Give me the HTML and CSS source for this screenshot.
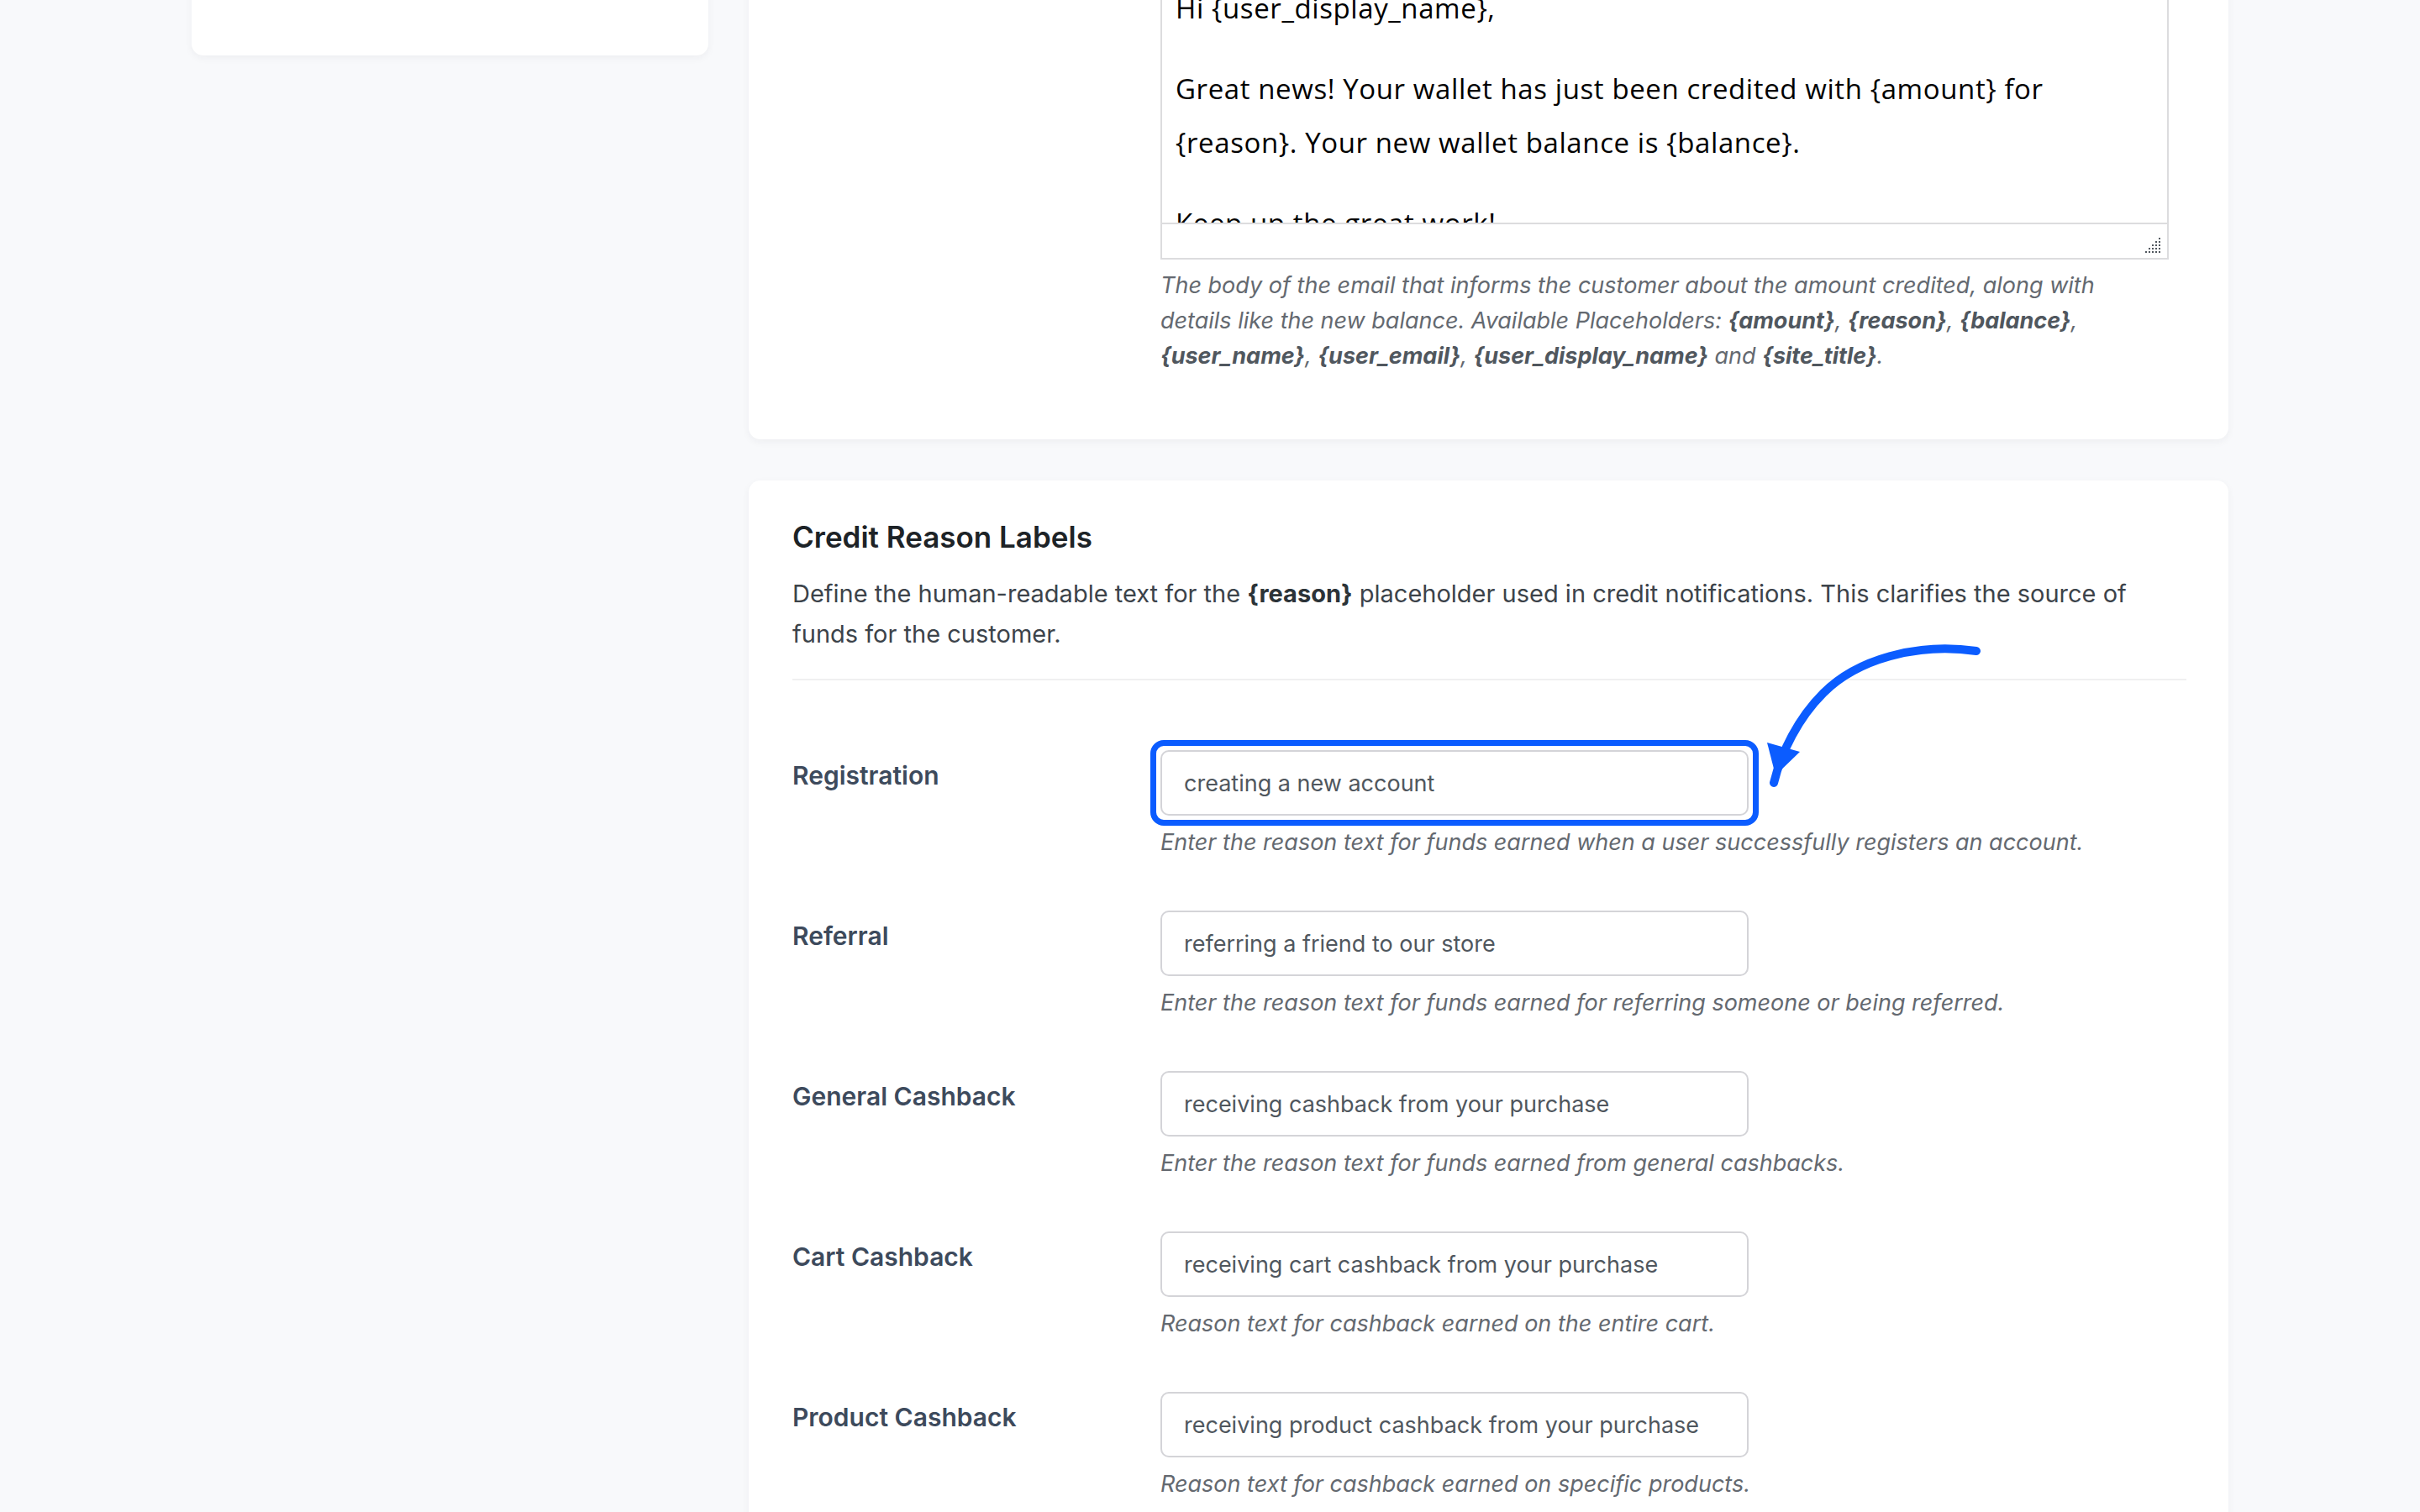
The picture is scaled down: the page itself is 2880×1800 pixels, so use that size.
FILE: index.html
```html
<!DOCTYPE html>
<html lang="en">
<head>
<meta charset="utf-8">
<title>Wallet Notification Settings</title>
<link rel="stylesheet" href="styles.css">
</head>
<body>
<div class="layout">
  <aside class="sidebar">
    <div class="side-card"></div>
  </aside>
  <main class="main">
    <section class="card card-email">
      <div class="form-row">
        <div class="form-label"></div>
        <div class="form-field">
          <div class="editor">
            <div class="editor-body">
              <p>Hi {user_display_name},</p>
              <p>Great news! Your wallet has just been credited with {amount} for<br>{reason}. Your new wallet balance is {balance}.</p>
              <p>Keep up the great work!</p>
            </div>
            <div class="editor-status">
              <svg class="grip" width="20" height="18" viewBox="0 0 20 18">
                <g fill="#50575e">
                  <rect x="16" y="0" width="2" height="2"/>
                  <rect x="12" y="4" width="2" height="2"/><rect x="16" y="4" width="2" height="2"/>
                  <rect x="8" y="8" width="2" height="2"/><rect x="12" y="8" width="2" height="2"/><rect x="16" y="8" width="2" height="2"/>
                  <rect x="4" y="12" width="2" height="2"/><rect x="8" y="12" width="2" height="2"/><rect x="12" y="12" width="2" height="2"/><rect x="16" y="12" width="2" height="2"/>
                  <rect x="0" y="16" width="2" height="2"/><rect x="4" y="16" width="2" height="2"/><rect x="8" y="16" width="2" height="2"/><rect x="12" y="16" width="2" height="2"/><rect x="16" y="16" width="2" height="2"/>
                </g>
              </svg>
            </div>
          </div>
          <p class="help">The body of the email that informs the customer about the amount credited, along with<br>details like the new balance. Available Placeholders: <b>{amount}</b>, <b>{reason}</b>, <b>{balance}</b>,<br><b>{user_name}</b>, <b>{user_email}</b>, <b>{user_display_name}</b> and <b>{site_title}</b>.</p>
        </div>
      </div>
    </section>

    <section class="card card-reasons">
      <h2 class="card-title">Credit Reason Labels</h2>
      <p class="intro">Define the human-readable text for the <strong>{reason}</strong> placeholder used in credit notifications. This clarifies the source of<br>funds for the customer.</p>
      <div class="rows">
        <div class="row">
          <label class="row-label" for="r1">Registration</label>
          <div class="row-field">
            <div class="input-wrap highlighted"><input id="r1" class="text-input" type="text" value="creating a new account"></div>
            <p class="help">Enter the reason text for funds earned when a user successfully registers an account.</p>
          </div>
        </div>
        <div class="row">
          <label class="row-label" for="r2">Referral</label>
          <div class="row-field">
            <div class="input-wrap"><input id="r2" class="text-input" type="text" value="referring a friend to our store"></div>
            <p class="help">Enter the reason text for funds earned for referring someone or being referred.</p>
          </div>
        </div>
        <div class="row">
          <label class="row-label" for="r3">General Cashback</label>
          <div class="row-field">
            <div class="input-wrap"><input id="r3" class="text-input" type="text" value="receiving cashback from your purchase"></div>
            <p class="help">Enter the reason text for funds earned from general cashbacks.</p>
          </div>
        </div>
        <div class="row">
          <label class="row-label" for="r4">Cart Cashback</label>
          <div class="row-field">
            <div class="input-wrap"><input id="r4" class="text-input" type="text" value="receiving cart cashback from your purchase"></div>
            <p class="help">Reason text for cashback earned on the entire cart.</p>
          </div>
        </div>
        <div class="row">
          <label class="row-label" for="r5">Product Cashback</label>
          <div class="row-field">
            <div class="input-wrap"><input id="r5" class="text-input" type="text" value="receiving product cashback from your purchase"></div>
            <p class="help">Reason text for cashback earned on specific products.</p>
          </div>
        </div>
      </div>
      <svg class="arrow" width="280" height="200" viewBox="0 0 280 200">
        <path d="M262 25 C 190 15 120 35 80 75 C 50 105 30 145 21 182" fill="none" stroke="#0b5cff" stroke-width="10" stroke-linecap="round"/>
        <polygon points="13,134 52,145 23,173" fill="#0b5cff"/>
      </svg>
    </section>
  </main>
</div>
</body>
</html>
```
FILE: styles.css
```css
* { box-sizing: border-box; }
html, body { margin: 0; padding: 0; }
body {
  background: #f8f9fb;
  font-family: Inter, "Liberation Sans", sans-serif;
  color: #3c434a;
  overflow: hidden;
}
.layout {
  display: flex;
  align-items: flex-start;
  gap: 48px;
  padding-left: 228px;
  margin-top: -200px;
}
.sidebar { width: 615px; flex: none; }
.side-card {
  height: 266px;
  background: #fff;
  border-radius: 14px;
  box-shadow: 0 3px 10px rgba(30, 40, 60, 0.05);
}
.main { width: 1761px; flex: none; display: flex; flex-direction: column; gap: 49px; }
.card {
  background: #fff;
  border-radius: 14px;
  box-shadow: 0 3px 10px rgba(30, 40, 60, 0.05);
}
.card-email { padding: 166px 50px 78px 52px; }
.form-row { display: grid; grid-template-columns: 438px 1fr; }
.editor {
  width: 1200px;
  border: 2px solid #dcdcde;
  background: #fff;
}
.editor-body {
  height: 299px;
  overflow: hidden;
  padding: 10px 16px;
  font-family: "Open Sans", sans-serif;
  font-size: 33px;
  letter-spacing: 0.6px;
  line-height: 64px;
  color: #000;
  border-bottom: 2px solid #dcdcde;
}
.editor-body p { margin: 0 0 32px; }
.editor-status {
  height: 40px;
  display: flex;
  justify-content: flex-end;
  align-items: flex-end;
  padding: 0 6px 6px 0;
}
.grip { display: block; }
.help {
  margin: 10px 0 0;
  font-size: 27px;
  line-height: 42px;
  font-style: italic;
  color: #646970;
}
.help b { font-weight: 700; color: #50575e; }
.card-reasons { position: relative; padding: 46px 50px 80px 52px; }
.card-title {
  margin: 0;
  font-size: 35px;
  line-height: 43px;
  font-weight: 600;
  color: #1d2327;
}
.intro {
  margin: 22px 0 0;
  font-size: 29px;
  line-height: 48px;
  color: #3c434a;
  padding-bottom: 29px;
  border-bottom: 2px solid #f0f0f1;
}
.intro strong { font-weight: 700; color: #2c3338; }
.rows { padding-top: 83px; }
.row {
  display: grid;
  grid-template-columns: 438px 1fr;
  padding-bottom: 60px;
}
.row-label {
  padding-top: 11px;
  font-size: 30px;
  line-height: 39px;
  font-weight: 600;
  color: #3d4a5c;
}
.input-wrap { position: relative; width: 700px; }
.highlighted::after {
  content: "";
  position: absolute;
  inset: -12px;
  border: 7px solid #0b5cff;
  border-radius: 16px;
  pointer-events: none;
}
.text-input {
  display: block;
  width: 700px;
  height: 78px;
  margin: 0;
  padding: 0 26px;
  border: 2px solid #d4d4d8;
  border-radius: 10px;
  background: #fff;
  font-family: Inter, "Liberation Sans", sans-serif;
  font-size: 27px;
  color: #50575e;
  outline: none;
}
.row-field .help { margin-top: 11px; }
.arrow {
  position: absolute;
  left: 1199px;
  top: 178px;
}
```
